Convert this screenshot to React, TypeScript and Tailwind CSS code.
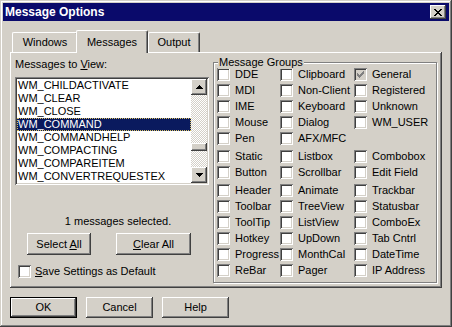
const font = "font-['Liberation_Sans',Arial,sans-serif]";
const raised =
  "shadow-[inset_-1px_-1px_#404040,inset_1px_1px_#ffffff,inset_-2px_-2px_#808080,inset_2px_2px_#d4d0c8]";
const sunken =
  "shadow-[inset_1px_1px_#808080,inset_-1px_-1px_#ffffff,inset_2px_2px_#404040,inset_-2px_-2px_#d4d0c8]";

const messages = [
  "WM_CHILDACTIVATE",
  "WM_CLEAR",
  "WM_CLOSE",
  "WM_COMMAND",
  "WM_COMMANDHELP",
  "WM_COMPACTING",
  "WM_COMPAREITEM",
  "WM_CONVERTREQUESTEX",
];

const groups: [string, string, string | null][] = [
  ["DDE", "Clipboard", "General"],
  ["MDI", "Non-Client", "Registered"],
  ["IME", "Keyboard", "Unknown"],
  ["Mouse", "Dialog", "WM_USER"],
  ["Pen", "AFX/MFC", null],
  ["Static", "Listbox", "Combobox"],
  ["Button", "Scrollbar", "Edit Field"],
  ["Header", "Animate", "Trackbar"],
  ["Toolbar", "TreeView", "Statusbar"],
  ["ToolTip", "ListView", "ComboEx"],
  ["Hotkey", "UpDown", "Tab Cntrl"],
  ["Progress", "MonthCal", "DateTime"],
  ["ReBar", "Pager", "IP Address"],
];

function CheckBox({ checked = false, disabled = false }: { checked?: boolean; disabled?: boolean }) {
  return (
    <span className={`w-[13px] h-[13px] shrink-0 flex ${sunken} ${disabled ? "bg-[#d4d0c8]" : "bg-white"}`}>
      {checked && (
        <svg width="13" height="13" viewBox="0 0 13 13" shapeRendering="crispEdges">
          <path
            d="M3 5h1v3H3z M4 6h1v3H4z M5 7h1v3H5z M6 6h1v3H6z M7 5h1v3H7z M8 4h1v3H8z M9 3h1v3H9z"
            fill={disabled ? "#808080" : "#000"}
          />
        </svg>
      )}
    </span>
  );
}

function Arrow({ up }: { up?: boolean }) {
  return (
    <svg width="7" height="4" viewBox="0 0 7 4" shapeRendering="crispEdges">
      <path d={up ? "M3 0h1v1H3z M2 1h3v1H2z M1 2h5v1H1z M0 3h7v1H0z" : "M0 0h7v1H0z M1 1h5v1H1z M2 2h3v1H2z M3 3h1v1H3z"} />
    </svg>
  );
}

function Button({ w, children, isDefault = false }: { w: string; children: React.ReactNode; isDefault?: boolean }) {
  return (
    <div className={`${w} h-[21px] flex ${isDefault ? "border border-black" : ""}`}>
      <div
        className={`flex-1 flex items-center justify-center bg-[#d4d0c8] ${
          isDefault ? "shadow-[inset_-1px_-1px_#404040,inset_1px_1px_#ffffff,inset_-2px_-2px_#808080]" : raised
        }`}
      >
        {children}
      </div>
    </div>
  );
}

export default function App() {
  return (
    <div
      className={`w-[452px] h-[327px] bg-[#d4d0c8] p-[3px] flex flex-col text-[11px] leading-[13px] text-black ${font} shadow-[inset_-1px_-1px_#404040,inset_1px_1px_#d4d0c8,inset_-2px_-2px_#808080,inset_2px_2px_#ffffff]`}
    >
      {/* title bar */}
      <div className="h-[18px] bg-[#0a0a6b] flex items-center justify-between pl-[2px] pr-[3px]">
        <span className="text-white font-bold text-[12px]">Message Options</span>
        <div className={`w-[16px] h-[14px] bg-[#d4d0c8] flex items-center justify-center ${raised}`}>
          <svg width="8" height="7" viewBox="0 0 8 7" shapeRendering="crispEdges">
            <path d="M0 0h2v1H0z M6 0h2v1H6z M1 1h2v1H1z M5 1h2v1H5z M2 2h4v1H2z M3 3h2v1H3z M2 4h4v1H2z M1 5h2v1H1z M5 5h2v1H5z M0 6h2v1H0z M6 6h2v1H6z" />
          </svg>
        </div>
      </div>

      {/* tabs */}
      <div className="mt-[9px] ml-[9px] flex items-end h-[22px]">
        <div className="w-[66px] h-[20px] border-t border-l border-white border-r border-r-[#404040] rounded-tl-[2px] rounded-tr-[2px] shadow-[inset_-1px_0_#808080] flex justify-center pt-[3px]">
          Windows
        </div>
        <div className="relative z-10 -ml-[2px] -mb-[1px] w-[72px] h-[23px] bg-[#d4d0c8] border-t border-l border-white border-r border-r-[#404040] rounded-tl-[2px] rounded-tr-[2px] shadow-[inset_-1px_0_#808080] flex justify-center pt-[5px]">
          Messages
        </div>
        <div className="w-[52px] h-[20px] border-t border-l border-white border-r border-r-[#404040] rounded-tl-[2px] rounded-tr-[2px] shadow-[inset_-1px_0_#808080] flex justify-center pt-[3px]">
          Output
        </div>
      </div>

      {/* tab panel */}
      <div className="ml-[7px] w-[432px] h-[236px] flex shadow-[inset_-1px_-1px_#404040,inset_1px_1px_#ffffff,inset_-2px_-2px_#808080]">
        <div className="w-[203px] pl-[5px] pt-[6px] flex flex-col">
          <span>
            Messages to <u>V</u>iew:
          </span>
          <div className={`mt-[6px] w-[194px] h-[108px] p-[2px] bg-white flex ${sunken}`}>
            <div className="flex-1 flex flex-col">
              {messages.map((m, i) => (
                <div
                  key={m}
                  className={`h-[13px] pl-[1px] whitespace-nowrap ${
                    i === 3 ? "bg-[#0a1a5e] text-white outline-1 outline-dotted outline-[#d8c060] -outline-offset-1" : ""
                  }`}
                >
                  {m}
                </div>
              ))}
            </div>
            <div className="w-[16px] flex flex-col">
              <div className={`h-[16px] bg-[#d4d0c8] flex items-center justify-center ${raised}`}>
                <Arrow up />
              </div>
              <div className="flex-1 flex flex-col bg-[image:repeating-conic-gradient(#d4d0c8_0%_25%,#ffffff_0%_50%)] bg-[length:2px_2px]">
                <div className="h-[48px]" />
                <div className={`h-[8px] bg-[#d4d0c8] ${raised}`} />
              </div>
              <div className={`h-[16px] bg-[#d4d0c8] flex items-center justify-center ${raised}`}>
                <Arrow />
              </div>
            </div>
          </div>
          <div className="mt-[30px] w-[194px] pl-[12px] text-center">1 messages selected.</div>
          <div className="mt-[5px] flex">
            <div className="ml-[12px]">
              <Button w="w-[64px] h-[22px]">
                <span>
                  Select <u>A</u>ll
                </span>
              </Button>
            </div>
            <div className="ml-[25px]">
              <Button w="w-[75px] h-[22px]">
                <span>
                  <u>C</u>lear All
                </span>
              </Button>
            </div>
          </div>
          <div className="mt-[10px] ml-[3px] flex items-center gap-[4px] h-[13px]">
            <CheckBox />
            <span>
              <u>S</u>ave Settings as Default
            </span>
          </div>
        </div>

        {/* message groups */}
        <div className="relative mt-[10px] w-[224px] h-[221px] border border-[#808080] shadow-[inset_1px_1px_#ffffff,1px_1px_#ffffff] pt-[5px] pl-[3px] flex flex-col">
          <span className="absolute -top-[7px] left-[4px] px-[1px] bg-[#d4d0c8]">Message Groups</span>
          {groups.map((row, i) => (
            <div key={i} className={`h-[16px] flex items-start ${i === 5 || i === 7 ? "mt-[2px]" : ""}`}>
              {row.map((label, j) => (
                <div
                  key={j}
                  className={`flex items-center gap-[5px] h-[13px] ${j === 0 ? "w-[63px]" : j === 1 ? "w-[74px]" : "flex-1"}`}
                >
                  {label && (
                    <>
                      <CheckBox checked={label === "General"} disabled={label === "General"} />
                      <span className="whitespace-nowrap">{label}</span>
                    </>
                  )}
                </div>
              ))}
            </div>
          ))}
        </div>
      </div>

      {/* dialog buttons */}
      <div className="mt-[9px] ml-[7px] flex gap-[9px]">
        <Button w="w-[67px]" isDefault>
          OK
        </Button>
        <Button w="w-[67px]">Cancel</Button>
        <Button w="w-[67px]">Help</Button>
      </div>
    </div>
  );
}
